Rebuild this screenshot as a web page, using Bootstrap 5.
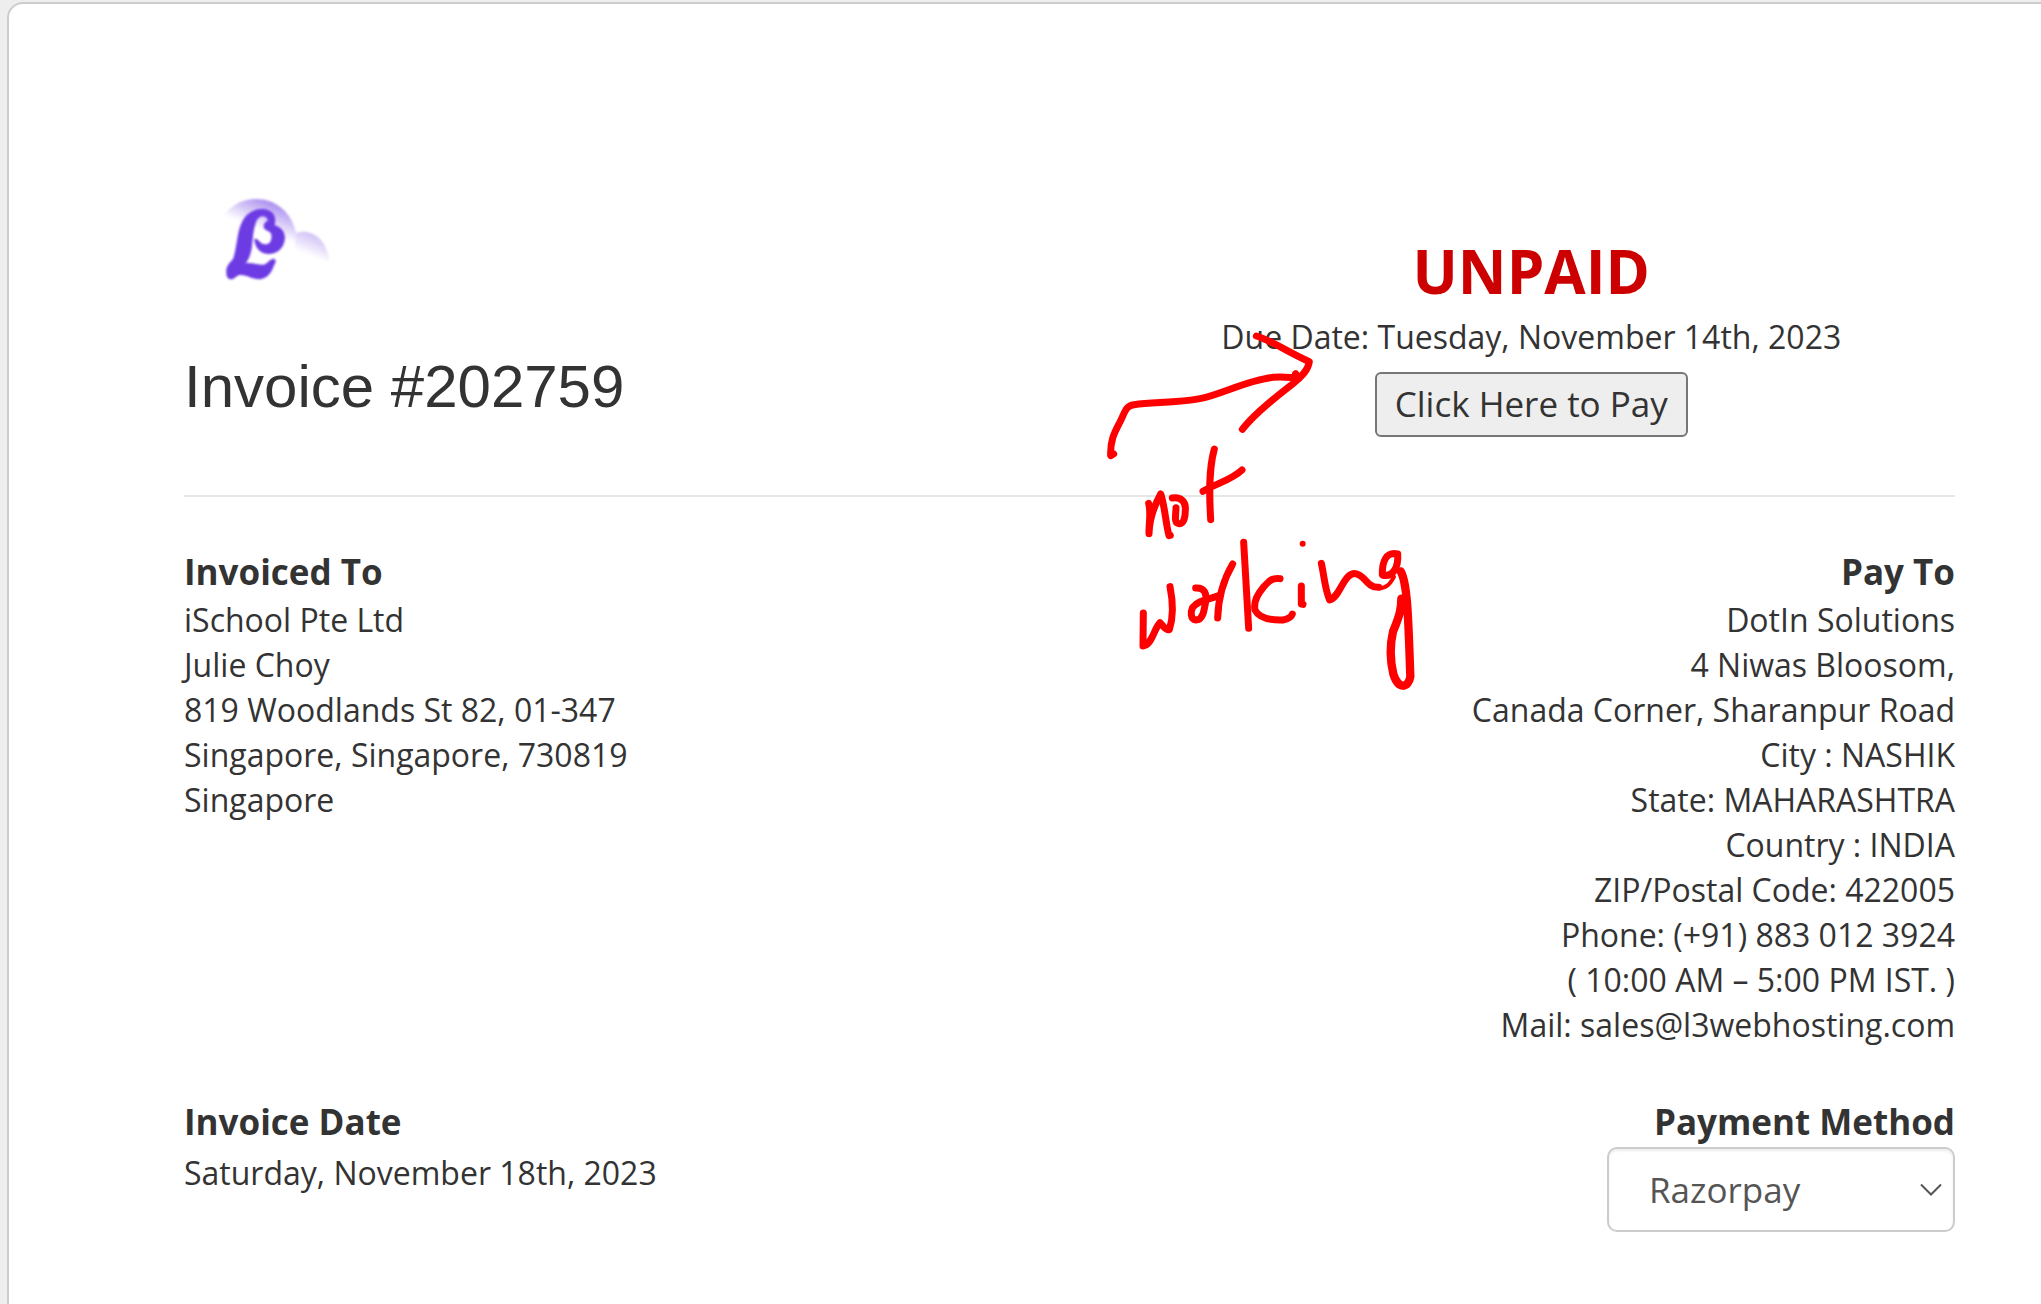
<!DOCTYPE html>
<html lang="en">
<head>
<meta charset="utf-8">
<meta name="viewport" content="width=device-width, initial-scale=1">
<title>Invoice #202759</title>
<link href="https://cdn.jsdelivr.net/npm/bootstrap@5.3.0/dist/css/bootstrap.min.css" rel="stylesheet">
<style>
  body { background: #eee; color: #333; font-family: "Open Sans", sans-serif; font-size: 32px; line-height: 45px; }
  .page-shell { padding: 2px 0 0 7px; }
  .invoice-sheet { border: 2px solid #ccc; border-width: 2px 0 0 2px; border-radius: 16px 0 0 0; padding: 176px 86px 50px 175px; }
  .invoice-row { --bs-gutter-x: 76px; }
  .brand-logo { display: block; width: 150px; height: 120px; margin: 0 0 54px 16px; }
  .invoice-title { font-family: "Liberation Sans", sans-serif; font-size: 60px; font-weight: 400; line-height: 66px; }
  .status-col { padding-top: 48px; }
  .status-unpaid { color: #c00; font-size: 60px; line-height: 86px; }
  .pay-btn { background: #eee; border: 2px solid #767676; border-radius: 6px; color: #333; font-size: 35px; line-height: 49px; padding: 5px 18px 7px; margin-top: 13px; }
  .pay-btn:hover { background: #ddd; color: #333; border-color: #555; }
  .sheet-rule { border-top: 2px solid #e6e6e6; opacity: 1; margin: 58px 0 50px; }
  .part-title { font-size: 35px; line-height: 50px; font-weight: 700; margin: 0; display: block; }
  .party-lines { line-height: 45px; margin: 0; }
  .dates-row { margin-top: 50px; }
  .date-line { line-height: 52px; }
  .method-select { width: 348px; height: 85px; border: 2px solid #ccc; border-radius: 10px; color: #555; font-size: 35px; line-height: 50px;
    padding: 14px 60px 14px 40px; box-shadow: inset 0 2px 3px rgba(0,0,0,.075); background-color: #fff;
    background-image: url("data:image/svg+xml,%3Csvg xmlns='http://www.w3.org/2000/svg' viewBox='0 0 22 14'%3E%3Cpath d='M1 1.5 11 11.5 21 1.5' fill='none' stroke='%23555' stroke-width='2'/%3E%3C/svg%3E");
    background-size: 22px 14px; background-position: right 11px center; }
  .ink-note { position: absolute; left: 1081px; top: 316px; width: 360px; height: 380px; pointer-events: none; }
</style>
<script src="https://cdn.jsdelivr.net/npm/bootstrap@5.3.0/dist/js/bootstrap.bundle.min.js"></script>
</head>
<body>
<div class="page-shell min-vh-100 d-flex flex-column">
  <main class="invoice-sheet bg-white flex-grow-1 position-relative">
    <div class="row invoice-row">
      <div class="col-6">
        <svg class="brand-logo" viewBox="0 0 450 360" role="img" aria-label="Company logo">
          <defs>
            <linearGradient id="cloudBig" gradientUnits="userSpaceOnUse" x1="243" y1="72" x2="208" y2="160">
              <stop offset="0" stop-color="#6d3be3" stop-opacity=".6"/><stop offset="1" stop-color="#6d3be3" stop-opacity="0"/>
            </linearGradient>
            <linearGradient id="cloudSmall" gradientUnits="userSpaceOnUse" x1="345" y1="150" x2="315" y2="222">
              <stop offset="0" stop-color="#6d3be3" stop-opacity=".38"/><stop offset="1" stop-color="#6d3be3" stop-opacity="0"/>
            </linearGradient>
            <filter id="soft"><feGaussianBlur stdDeviation="2.5"/></filter>
          </defs>
          <g filter="url(#soft)">
            <path d="M70 106Q112 57 168 57C225 57 275 95 288 160L283 192L150 145Z" fill="url(#cloudBig)"/>
            <path d="M288 159Q320 147 352 170Q384 195 387 246L283 205Z" fill="url(#cloudSmall)"/>
            <path d="M79 279C77 258 89 249 99 237C105 221 108 196 113 170C119 134 132 105 157 94C179 82 211 86 222 105C227 114 226 126 224 136C244 142 255 156 255 174C253 203 233 223 204 222C177 220 164 200 163 177C175 173 179 193 195 193C210 194 216 181 214 163C210 152 198 154 192 144C188 135 194 127 204 121C197 104 178 105 169 124C158 154 159 181 155 206C151 224 148 237 137 250C156 247 169 254 187 254C205 253 202 240 220 236C231 238 227 248 221 259C215 277 204 293 184 297C159 301 140 282 119 285C108 287 103 299 91 298C83 297 79 288 79 279Z" fill="#6d3be3"/>
          </g>
        </svg>
        <h1 class="invoice-title mb-0">Invoice #202759</h1>
      </div>
      <div class="col-6 status-col text-center">
        <div class="status-unpaid fw-bold">UNPAID</div>
        <div>Due Date: Tuesday, November 14th, 2023</div>
        <button type="button" class="btn pay-btn">Click Here to Pay</button>
      </div>
    </div>

    <hr class="sheet-rule">

    <div class="row invoice-row">
      <div class="col-6">
        <h2 class="part-title">Invoiced To</h2>
        <address class="party-lines">iSchool Pte Ltd<br>Julie Choy<br>819 Woodlands St 82, 01-347<br>Singapore, Singapore, 730819<br>Singapore</address>
      </div>
      <div class="col-6 text-end">
        <h2 class="part-title">Pay To</h2>
        <address class="party-lines">DotIn Solutions<br>4 Niwas Bloosom,<br>Canada Corner, Sharanpur Road<br>City : NASHIK<br>State: MAHARASHTRA<br>Country : INDIA<br>ZIP/Postal Code: 422005<br>Phone: (+91) 883 012 3924<br>( 10:00 AM – 5:00 PM IST. )<br>Mail: sales@l3webhosting.com</address>
      </div>
    </div>

    <div class="row invoice-row dates-row">
      <div class="col-6">
        <h2 class="part-title">Invoice Date</h2>
        <div class="date-line">Saturday, November 18th, 2023</div>
      </div>
      <div class="col-6 text-end">
        <label class="part-title" for="method">Payment Method</label>
        <select id="method" class="form-select method-select ms-auto"><option selected>Razorpay</option></select>
      </div>
    </div>

    <!-- Handwritten note: arrow to the pay button, "not working" -->
    <svg class="ink-note" viewBox="0 0 1080 1140" fill="none" stroke="#f00" stroke-width="21" stroke-linecap="round" stroke-linejoin="round" role="img" aria-label="Handwritten note: not working">
      <path d="M71 402L62 407C60 360 75 335 90 306C105 278 105 258 132 254C190 246 260 249 330 236C400 222 470 180 550 172C580 169 600 173 622 174M617 161L626 175"/>
      <path d="M499 48C545 62 600 100 658 125C655 150 635 170 605 194C545 240 490 285 457 328"/>
      <path d="M373 387C355 450 358 530 362 599M339 514C375 492 425 480 456 450"/>
      <path d="M176 550C184 580 176 610 177 641C178 595 194 555 212 522C225 560 227 610 237 647L241 646"/>
      <path d="M247 534C276 530 288 548 286 570C286 590 282 612 268 611C250 610 258 585 258 563"/>
      <path d="M160 879L159 978C186 975 190 930 210 908C218 915 226 932 238 929C251 890 248 840 240 800"/>
      <path d="M317 804C346 802 350 824 347 845C342 875 338 900 318 900C300 898 302 875 308 862C325 840 360 838 383 828"/>
      <path d="M383 894C385 830 400 780 428 732"/>
      <path d="M461 667L476 925M570 776C545 772 535 785 520 802C500 825 490 845 495 870C508 896 545 901 578 900C595 897 604 892 607 882"/>
      <path d="M634 798V852L639 853"/><circle cx="638" cy="671" r="9" fill="#f00" stroke="none"/>
      <path d="M694 730C703 770 705 810 719 840C752 830 760 757 797 761C825 764 830 804 866 802"/>
      <path d="M862 804C890 807 901 790 912 770" stroke-width="12"/>
      <path d="M923 702C888 694 876 725 877 765C910 773 926 740 923 702"/>
      <path d="M932 754C953 790 955 900 961 1070C955 1105 925 1110 910 1062C899 1015 902 965 909 935C930 885 934 865 934 836" stroke-width="25"/>
    </svg>
  </main>
</div>
</body>
</html>
